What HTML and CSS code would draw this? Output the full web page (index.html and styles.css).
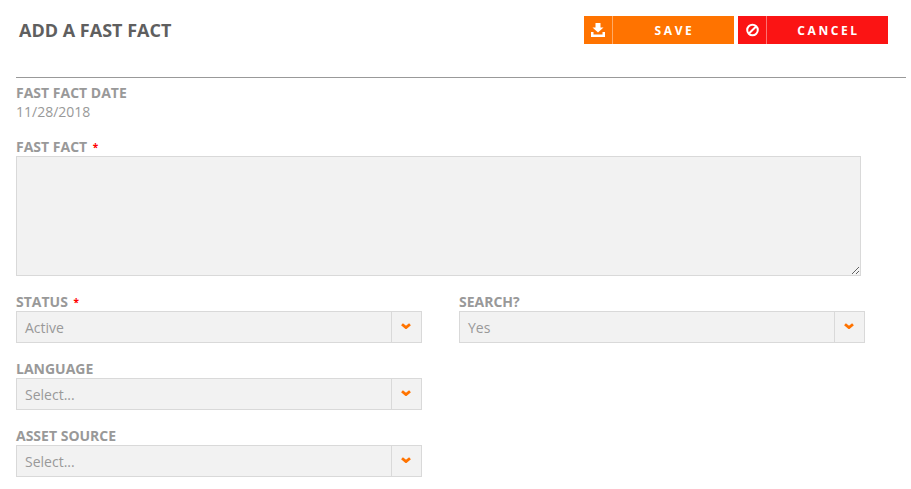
FILE: index.html
```html
<!DOCTYPE html>
<html lang="en">
<head>
<meta charset="utf-8">
<title>Add a Fast Fact</title>
<link rel="stylesheet" href="styles.css">
</head>
<body>
<header class="header">
  <h1 class="title">ADD A FAST FACT</h1>
  <div class="actions">
    <button class="btn btn-save" type="button">
      <span class="btn-icon"><svg width="16" height="14" viewBox="0 0 16 14"><path d="M5.500 0h5v4.500h3L8 9.500 2.500 4.500h3z" fill="#fff"/><path d="M1 9h2.500v2.500h9V9H15v5H1z" fill="#fff"/></svg></span>
      <span class="btn-label">SAVE</span>
    </button>
    <button class="btn btn-cancel" type="button">
      <span class="btn-icon"><svg width="14" height="14" viewBox="0 0 14 14"><circle cx="7.500" cy="7" r="5.300" fill="none" stroke="#fff" stroke-width="2"/><path d="M3.700 10.800 11.300 3.200" stroke="#fff" stroke-width="2"/></svg></span>
      <span class="btn-label">CANCEL</span>
    </button>
  </div>
</header>
<main class="form">
  <div class="field-date">
    <div class="label">FAST FACT DATE</div>
    <div class="value">11/28/2018</div>
  </div>
  <div class="field-fact">
    <label class="label" for="fact">FAST FACT <span class="req">*</span></label>
    <textarea class="textarea" id="fact"></textarea>
  </div>
  <div class="grid">
    <div class="field">
      <div class="label">STATUS <span class="req">*</span></div>
      <div class="select"><span class="select-text">Active</span><span class="select-arrow"><svg width="10" height="6" viewBox="0 0 10 6"><path d="M1 1.200 5 4.600 9 1.200" fill="none" stroke="#ff7300" stroke-width="2.800"/></svg></span></div>
    </div>
    <div class="field">
      <div class="label">SEARCH?</div>
      <div class="select"><span class="select-text">Yes</span><span class="select-arrow"><svg width="10" height="6" viewBox="0 0 10 6"><path d="M1 1.200 5 4.600 9 1.200" fill="none" stroke="#ff7300" stroke-width="2.800"/></svg></span></div>
    </div>
    <div class="field">
      <div class="label">LANGUAGE</div>
      <div class="select"><span class="select-text">Select...</span><span class="select-arrow"><svg width="10" height="6" viewBox="0 0 10 6"><path d="M1 1.200 5 4.600 9 1.200" fill="none" stroke="#ff7300" stroke-width="2.800"/></svg></span></div>
    </div>
    <div class="field field-row">
      <div class="label">ASSET SOURCE</div>
      <div class="select"><span class="select-text">Select...</span><span class="select-arrow"><svg width="10" height="6" viewBox="0 0 10 6"><path d="M1 1.200 5 4.600 9 1.200" fill="none" stroke="#ff7300" stroke-width="2.800"/></svg></span></div>
    </div>
  </div>
</main>
</body>
</html>
```
FILE: styles.css
```css
* { box-sizing: border-box; }
html, body { margin: 0; padding: 0; }
body {
  background: #fff;
  font-family: "Open Sans", sans-serif;
  color: #999;
  font-size: 14px;
  padding: 0 5px 0 16px;
}
.header {
  height: 78px;
  border-bottom: 1px solid #999;
  display: flex;
  justify-content: space-between;
  align-items: flex-start;
  padding: 16px 18px 0 3px;
}
.title {
  margin: 0;
  font-size: 18px;
  font-weight: 700;
  line-height: 28px;
  color: #5f5f5f;
}
.actions { display: flex; gap: 4px; }
.btn {
  display: flex;
  width: 150px;
  height: 28px;
  padding: 0;
  border: 0;
  color: #fff;
  font-family: inherit;
  font-size: 12px;
  font-weight: 700;
  letter-spacing: 2.600px;
}
.btn-save { background: #ff7300; }
.btn-cancel { background: #fb1414; }
.btn-icon {
  width: 29px;
  height: 28px;
  flex: none;
  display: flex;
  align-items: center;
  justify-content: center;
  border-right: 1px solid rgba(255, 255, 255, .4);
}
.btn-label { flex: 1; padding-left: 2px; line-height: 29px; text-align: center; }
.label {
  display: block;
  font-weight: 700;
  font-size: 14px;
  line-height: 19px;
  color: #999;
}
.field-date { padding-top: 5px; }
.value { line-height: 19px; margin-top: 0; }
.field-fact { margin-top: 16px; }
.req { color: #f00; font-weight: 700; font-size: 10px; line-height: 0; margin-left: 2px; vertical-align: 1px; }
.textarea {
  display: block;
  width: 845px;
  height: 120px;
  margin: 0;
  background: #f2f2f2;
  border: 1px solid #d9d9d9;
  border-radius: 0;
  resize: both;
  outline: none;
}
.grid {
  display: grid;
  grid-template-columns: 443px 406px;
  row-gap: 16px;
  margin-top: 16px;
}
.field-row { grid-column: 1; }
.select {
  width: 406px;
  height: 32px;
  display: flex;
  background: #f2f2f2;
  border: 1px solid #d9d9d9;
}
.select-text {
  flex: 1;
  padding: 1px 0 0 8px;
  line-height: 30px;
  color: #999;
}
.select-arrow {
  width: 30px;
  flex: none;
  border-left: 1px solid #d9d9d9;
  display: flex;
  align-items: center;
  justify-content: center;
  padding: 0 1px 2px 0;
}
```
